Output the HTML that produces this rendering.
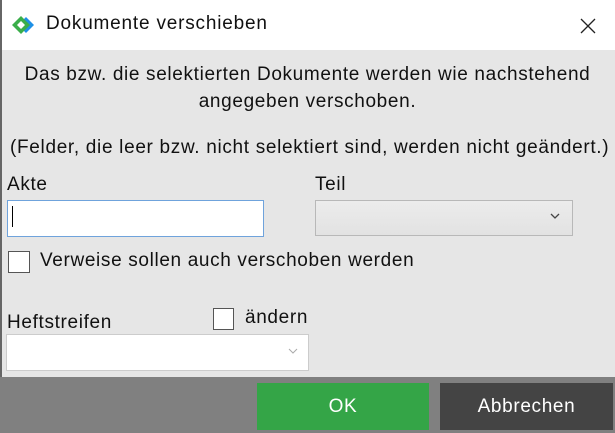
<!DOCTYPE html>
<html><head><style>
body{margin:0;width:615px;height:433px;overflow:hidden;font-family:"Liberation Sans",sans-serif;color:#111;position:relative;background:#e6e6e6;font-size:19px;letter-spacing:0.65px}
.a{position:absolute;white-space:nowrap}
</style></head><body>
<div class="a" style="left:0;top:0;width:615px;height:50px;background:#fff"></div>
<div class="a" style="left:0;top:0;width:2px;height:433px;background:#666"></div>
<svg class="a" style="left:12px;top:14px" width="28" height="22" viewBox="0 0 28 22">
<path d="M14 3 L22 11 L14 19 L11 16 L16 11 L11 6 Z" fill="#1e90e6"/>
<path d="M9 2 L18 11 L9 20 L0 11 Z" fill="#3aae4a"/>
<path d="M9 7 L13 11 L9 15 L5 11 Z" fill="#fff"/>
</svg>
<div class="a" style="left:46px;top:13px;font-size:19px;letter-spacing:0.8px">Dokumente verschieben</div>
<svg class="a" style="left:580px;top:18px" width="16" height="16"><path d="M1 1L15 15M15 1L1 15" stroke="#222" stroke-width="1.3"/></svg>
<div class="a" style="left:0;width:615px;top:61px;text-align:center;line-height:27px">Das bzw. die selektierten Dokumente werden wie nachstehend<br>angegeben verschoben.</div>
<div class="a" style="left:10px;top:137px;letter-spacing:0.68px">(Felder, die leer bzw. nicht selektiert sind, werden nicht geändert.)</div>
<div class="a" style="left:7px;top:174px">Akte</div>
<div class="a" style="left:315px;top:174px">Teil</div>
<div class="a" style="left:7px;top:200px;width:255px;height:35px;background:#fff;border:1px solid #6fa3dc"></div>
<div class="a" style="left:12px;top:206px;width:1px;height:21px;background:#000"></div>
<div class="a" style="left:315px;top:200px;width:256px;height:34px;background:linear-gradient(#ececec,#e2e2e2);border:1px solid #b8b8b8"></div>
<svg class="a" style="left:550px;top:213px" width="10" height="7"><path d="M1 1L5 5L9 1" stroke="#444" fill="none" stroke-width="1.3"/></svg>
<div class="a" style="left:8px;top:251px;width:20px;height:20px;background:#fff;border:1px solid #555"></div>
<div class="a" style="left:40px;top:250px">Verweise sollen auch verschoben werden</div>
<div class="a" style="left:7px;top:312px">Heftstreifen</div>
<div class="a" style="left:213px;top:308px;width:19px;height:20px;background:#fff;border:1px solid #555"></div>
<div class="a" style="left:245px;top:307px">ändern</div>
<div class="a" style="left:6px;top:334px;width:301px;height:35px;background:#fff;border:1px solid #ccc"></div>
<svg class="a" style="left:288px;top:348px" width="10" height="7"><path d="M1 1L5 5L9 1" stroke="#aaa" fill="none" stroke-width="1"/></svg>
<div class="a" style="left:0;top:377px;width:615px;height:56px;background:#808080"></div>
<div class="a" style="left:257px;top:383px;width:172px;height:47px;background:#34a547;color:#fff;text-align:center;line-height:47px">OK</div>
<div class="a" style="left:440px;top:383px;width:173px;height:47px;background:#444;color:#fff;text-align:center;line-height:47px">Abbrechen</div>
</body></html>
